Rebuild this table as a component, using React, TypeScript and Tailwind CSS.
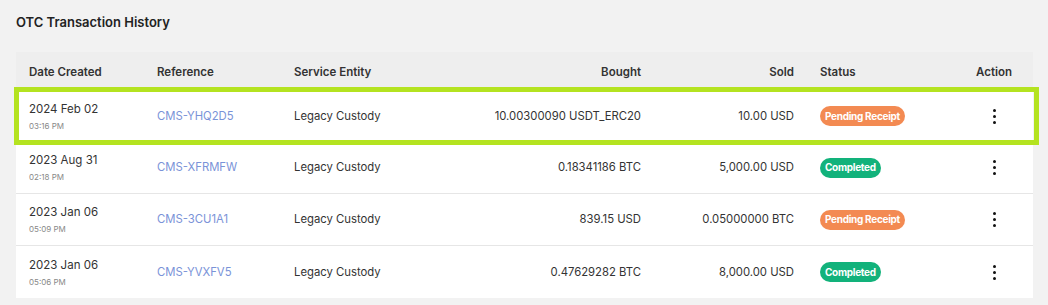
import React from 'react';

type Row = {
  date: string;
  time: string;
  reference: string;
  entity: string;
  bought: string;
  sold: string;
  status: 'Pending Receipt' | 'Completed';
  highlighted?: boolean;
};

const rows: Row[] = [
  { date: '2024 Feb 02', time: '03:16 PM', reference: 'CMS-YHQ2D5', entity: 'Legacy Custody', bought: '10.00300090 USDT_ERC20', sold: '10.00 USD', status: 'Pending Receipt', highlighted: true },
  { date: '2023 Aug 31', time: '02:18 PM', reference: 'CMS-XFRMFW', entity: 'Legacy Custody', bought: '0.18341186 BTC', sold: '5,000.00 USD', status: 'Completed' },
  { date: '2023 Jan 06', time: '05:09 PM', reference: 'CMS-3CU1A1', entity: 'Legacy Custody', bought: '839.15 USD', sold: '0.05000000 BTC', status: 'Pending Receipt' },
  { date: '2023 Jan 06', time: '05:06 PM', reference: 'CMS-YVXFV5', entity: 'Legacy Custody', bought: '0.47629282 BTC', sold: '8,000.00 USD', status: 'Completed' },
];

const cols = 'grid grid-cols-[128px_137px_139px_234px_153px_148px_78px]';

function StatusBadge({ status }: { status: Row['status'] }) {
  const color = status === 'Completed' ? 'bg-[#12b27b]' : 'bg-[#f38a52]';
  return (
    <span className={`${color} inline-flex h-5 items-center rounded-full px-[5px] text-[10px] font-bold tracking-[-0.3px] text-white`}>
      {status}
    </span>
  );
}

function Kebab() {
  return (
    <div className="flex flex-col items-center gap-[3px]">
      <span className="h-[3px] w-[3px] rounded-full bg-[#111]" />
      <span className="h-[3px] w-[3px] rounded-full bg-[#111]" />
      <span className="h-[3px] w-[3px] rounded-full bg-[#111]" />
    </div>
  );
}

export default function App() {
  return (
    <div className="h-[305px] w-[1048px] bg-[#f2f2f2] pl-4 font-['Inter',sans-serif] text-[#333]">
      <h1 className="pt-[14px] text-[13px] font-semibold leading-4 text-[#222]">OTC Transaction History</h1>

      <div className="mt-[22px] w-[1017px]">
        <div className={`${cols} h-[38px] items-center bg-[#eeeeee] pt-[3px] text-[11.5px] font-semibold text-[#333]`}>
          <div className="px-[13px]">Date Created</div>
          <div className="px-[13px]">Reference</div>
          <div className="px-[13px]">Service Entity</div>
          <div className="px-[13px] text-right">Bought</div>
          <div className="px-[13px] text-right">Sold</div>
          <div className="px-[13px]">Status</div>
          <div className="text-center">Action</div>
        </div>

        <div className="bg-white">
          {rows.map((r, i) => (
            <div
              key={i}
              className={`${cols} relative h-[52px] items-center text-[11.3px] ${i < rows.length - 1 && !r.highlighted && !rows[i + 1]?.highlighted ? 'border-b border-[#e6e6e6]' : ''}`}
            >
              {r.highlighted && (
                <div className="pointer-events-none absolute -top-[3px] -right-[6px] -bottom-[3px] -left-[2px] border-[5px] border-[#b4e320]" />
              )}
              <div className="px-[13px]">
                <div className="text-[11.5px] leading-4 text-[#333]">{r.date}</div>
                <div className="mt-[3px] text-[8px] leading-3 text-[#888]">{r.time}</div>
              </div>
              <div className="px-[13px] text-[#7a93d8]">{r.reference}</div>
              <div className="px-[13px] text-[#333]">{r.entity}</div>
              <div className="px-[13px] text-right text-[#333]">{r.bought}</div>
              <div className="px-[13px] text-right text-[#333]">{r.sold}</div>
              <div className="px-[13px]">
                <StatusBadge status={r.status} />
              </div>
              <div className="flex justify-center">
                <Kebab />
              </div>
            </div>
          ))}
        </div>
      </div>
    </div>
  );
}
